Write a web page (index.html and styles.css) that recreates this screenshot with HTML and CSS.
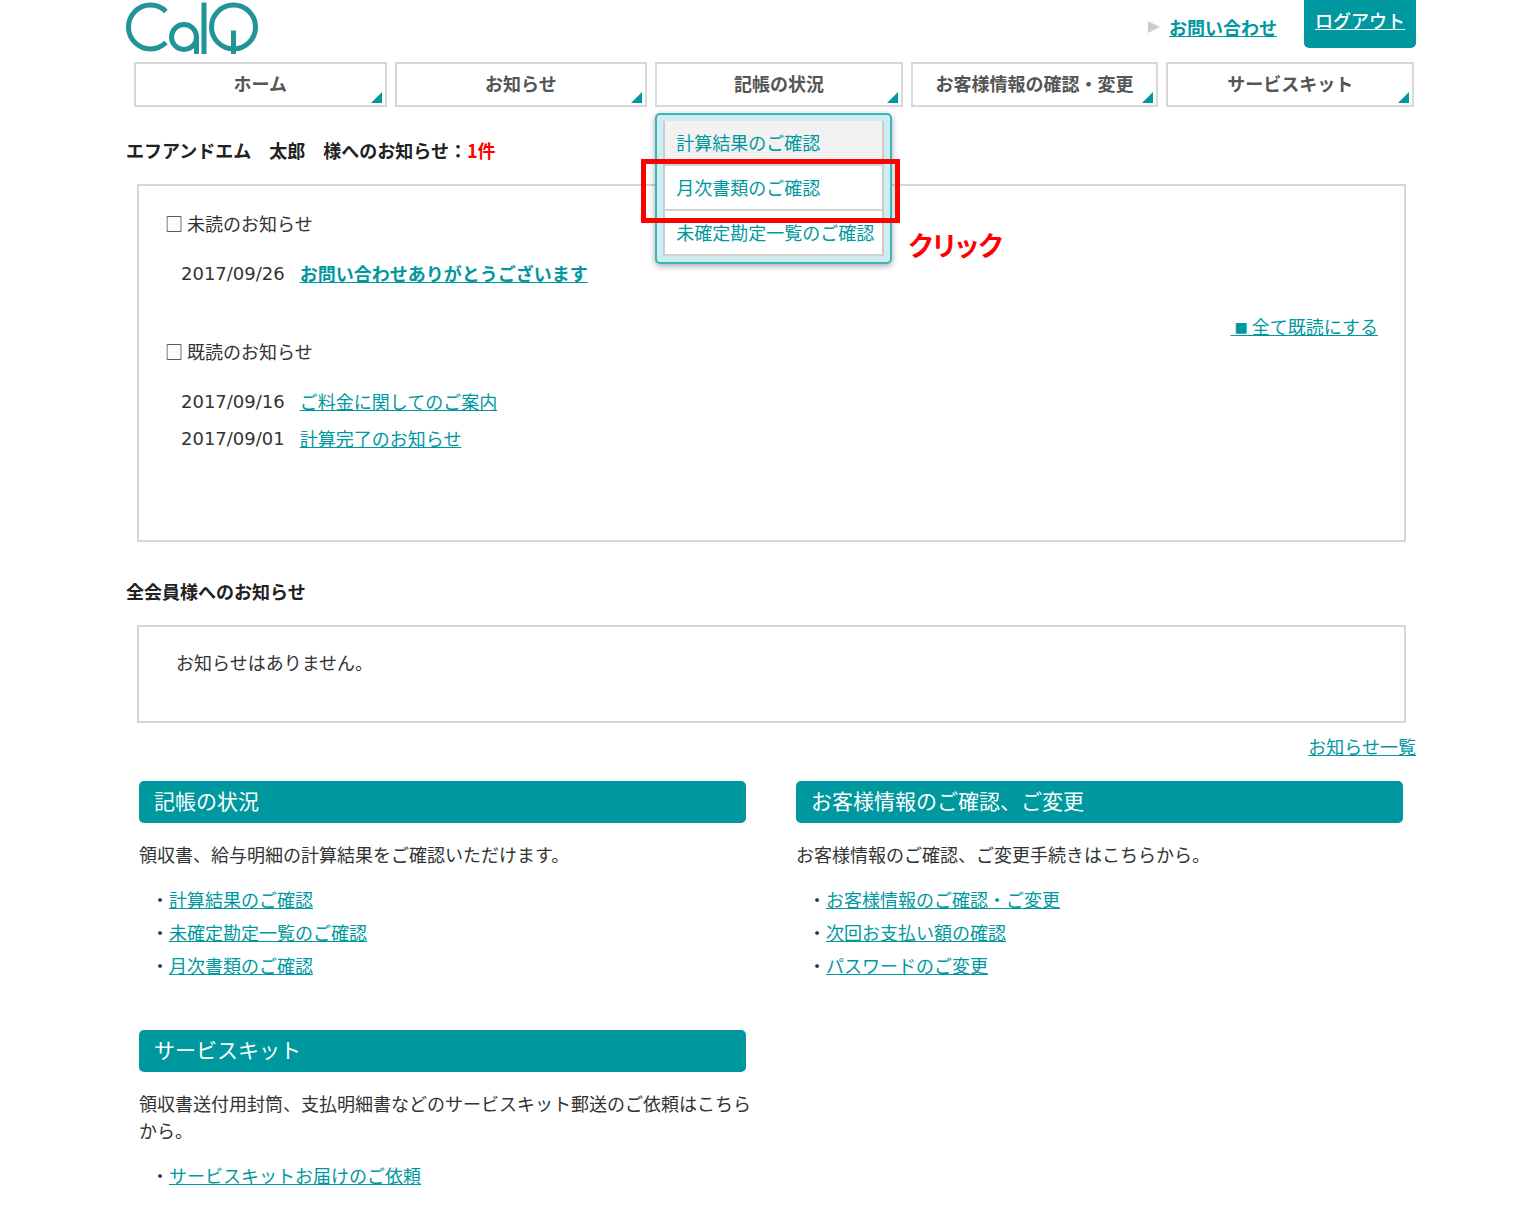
FILE: index.html
```html
<!DOCTYPE html>
<html lang="ja">
<head>
<meta charset="utf-8">
<title>CalQ</title>
<link rel="stylesheet" href="styles.css">
</head>
<body>
<div class="page">
  <header class="header">
    <a class="logo" href="#" aria-label="CalQ">
      <svg width="132" height="56" viewBox="0 0 132 56" fill="none" stroke="#1f9598" stroke-width="5">
        <path d="M40 11.4A22 22 0 1 0 40 42.6"/>
        <circle cx="58" cy="37" r="12.5"/>
        <path d="M70.5 37V54M78 2.5V54M107.5 30.5V54"/>
        <circle cx="107.5" cy="27" r="22"/>
      </svg>
    </a>
    <div class="header-links">
      <a class="contact" href="#">お問い合わせ</a>
      <a class="logout" href="#">ログアウト</a>
    </div>
  </header>

  <nav class="nav">
    <ul class="nav-list">
      <li><a class="nav-link" href="#">ホーム</a></li>
      <li><a class="nav-link" href="#">お知らせ</a></li>
      <li class="nav-open">
        <a class="nav-link" href="#">記帳の状況</a>
        <div class="dropdown">
          <ul class="dropdown-list">
            <li><a class="active" href="#">計算結果のご確認</a></li>
            <li><a href="#">月次書類のご確認</a></li>
            <li><a href="#">未確定勘定一覧のご確認</a></li>
          </ul>
          <div class="callout-frame"></div>
          <div class="callout-text">クリック</div>
        </div>
      </li>
      <li><a class="nav-link" href="#">お客様情報の確認・変更</a></li>
      <li><a class="nav-link" href="#">サービスキット</a></li>
    </ul>
  </nav>

  <main>
    <h2 class="title">エフアンドエム　太郎　様へのお知らせ：<span class="count">1件</span></h2>
    <section class="box box-personal">
      <h3 class="subtitle">□ 未読のお知らせ</h3>
      <ul class="news">
        <li><time>2017/09/26</time><a class="unread" href="#">お問い合わせありがとうございます</a></li>
      </ul>
      <p class="mark-read"><a href="#">&nbsp;<span class="square">■</span>&nbsp;全て既読にする</a></p>
      <h3 class="subtitle">□ 既読のお知らせ</h3>
      <ul class="news">
        <li><time>2017/09/16</time><a href="#">ご料金に関してのご案内</a></li>
        <li><time>2017/09/01</time><a href="#">計算完了のお知らせ</a></li>
      </ul>
    </section>

    <h2 class="title title-all">全会員様へのお知らせ</h2>
    <section class="box box-all"><p>お知らせはありません。</p></section>
    <p class="more"><a href="#">お知らせ一覧</a></p>

    <div class="panels">
      <section>
        <h2 class="panel-title">記帳の状況</h2>
        <p class="panel-text">領収書、給与明細の計算結果をご確認いただけます。</p>
        <ul class="links">
          <li><a href="#">計算結果のご確認</a></li>
          <li><a href="#">未確定勘定一覧のご確認</a></li>
          <li><a href="#">月次書類のご確認</a></li>
        </ul>
      </section>
      <section>
        <h2 class="panel-title">お客様情報のご確認、ご変更</h2>
        <p class="panel-text">お客様情報のご確認、ご変更手続きはこちらから。</p>
        <ul class="links">
          <li><a href="#">お客様情報のご確認・ご変更</a></li>
          <li><a href="#">次回お支払い額の確認</a></li>
          <li><a href="#">パスワードのご変更</a></li>
        </ul>
      </section>
      <section>
        <h2 class="panel-title">サービスキット</h2>
        <p class="panel-text">領収書送付用封筒、支払明細書などのサービスキット郵送のご依頼はこちらから。</p>
        <ul class="links">
          <li><a href="#">サービスキットお届けのご依頼</a></li>
        </ul>
      </section>
    </div>
  </main>
</div>
</body>
</html>
```
FILE: styles.css
```css
* { box-sizing: border-box; }

body, h2, h3, p, ul { margin: 0; padding: 0; }

ul { list-style: none; }

body {
  background: #fff;
  color: #333;
  font: 18px/26px "Noto Sans CJK JP", sans-serif;
}

a { color: #00989f; }

.page { padding: 0 124px 12px 126px; }

/* Header */
.header {
  display: flex;
  justify-content: space-between;
  align-items: flex-start;
  height: 62px;
}

.logo svg { display: block; }

.header-links {
  display: flex;
  align-items: flex-start;
  gap: 27px;
}

.contact {
  display: flex;
  align-items: center;
  gap: 9px;
  padding-top: 14px;
  font-weight: 700;
}

.contact::before {
  content: "";
  border-left: 12px solid #ccc;
  border-top: 6px solid transparent;
  border-bottom: 6px solid transparent;
}

.logout {
  height: 48px;
  padding: 7px 11px;
  border-radius: 0 0 5px 5px;
  background: #00989f;
  color: #fff;
  font-weight: 500;
}

/* Navigation */
.nav { padding: 0 2px 0 8px; }

.nav-list {
  display: grid;
  grid-template-columns: 253fr 253fr 248fr 248fr 248fr;
  gap: 8px;
}

.nav-link {
  position: relative;
  display: block;
  height: 45px;
  border: 2px solid #d8d8d8;
  color: #555;
  font-weight: 700;
  line-height: 39px;
  text-align: center;
  text-decoration: none;
}

.nav-link::after {
  content: "";
  position: absolute;
  right: 3px;
  bottom: 2px;
  border-left: 11px solid transparent;
  border-bottom: 11px solid #00989f;
}

.nav-open { position: relative; }

.dropdown {
  position: absolute;
  z-index: 1;
  top: 51px;
  left: 0;
  width: 237px;
  padding: 6px;
  border: 2px solid #3ab5b8;
  border-radius: 5px;
  background: #cdeef1;
  box-shadow: 0 2px 6px rgba(0, 0, 0, .35);
}

.dropdown-list {
  border: solid #ccc;
  border-width: 0 2px;
}

.dropdown-list a {
  display: block;
  height: 45px;
  padding-left: 11px;
  border-bottom: 2px solid #d2d2d2;
  background: #fff;
  line-height: 42px;
  text-decoration: none;
}

.dropdown-list .active { background: #f2f2f2; }

.callout-frame {
  position: absolute;
  top: 44px;
  left: -16px;
  width: 259px;
  height: 64px;
  border: 5px solid #f00;
}

.callout-text {
  position: absolute;
  top: 114px;
  left: 251px;
  color: #f00;
  font-size: 27px;
  font-weight: 700;
  line-height: 32px;
  white-space: nowrap;
  font-feature-settings: "palt";
}

/* Notices */
.title {
  margin: 30px 0 21px;
  color: #222;
  font-size: 18px;
  font-weight: 700;
}

.title-all { margin-top: 36px; }

.count { color: #f00; }

.box {
  margin: 0 10px 0 11px;
  border: 2px solid #d6d6d6;
}

.box-personal { padding: 24px 26px 83px; }

.subtitle {
  font-size: 18px;
  font-weight: 400;
}

.news { padding: 19px 0 0 16px; }

.news li {
  display: flex;
  gap: 15px;
  line-height: 37px;
}

.news time { font-family: "DejaVu Sans", sans-serif; }

.unread { font-weight: 700; }

.mark-read {
  margin-top: 22px;
  line-height: 24px;
  text-align: right;
}

.square {
  font-family: "DejaVu Sans", sans-serif;
  font-size: 14px;
  line-height: 14px;
  vertical-align: 2px;
}

.box-all { padding: 22px 37px 46px; }

.more {
  margin: 11px 0 23px;
  line-height: 24px;
  text-align: right;
}

/* Panels */
.panels {
  display: grid;
  grid-template-columns: 1fr 1fr;
  gap: 48px 50px;
  margin: 0 13px;
}

.panel-title {
  padding: 0 15px 4px;
  border-radius: 5px;
  background: #00989f;
  color: #fff;
  font-size: 21px;
  font-weight: 400;
  line-height: 38px;
}

/* Body copy runs slightly past the title bar into the gutter */
.panel-text {
  margin: 18px -12px 15px 0;
  line-height: 27px;
}

.links { padding-left: 12px; }

.links li { line-height: 33px; }

.links li::before { content: "・"; }
```
